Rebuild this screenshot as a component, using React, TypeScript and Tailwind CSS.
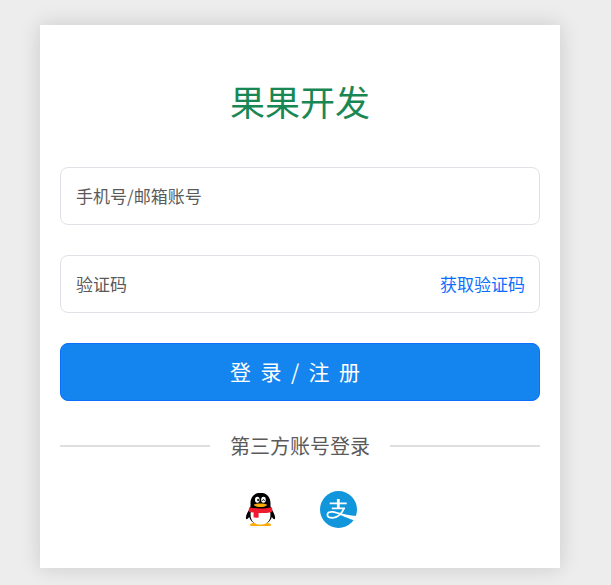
import React, { useState } from 'react';

const QQIcon: React.FC = () => (
  <svg viewBox="1 0 37 37" className="size-[37px]" aria-hidden="true">
    <path
      d="M18.500 1.700c-6.200 0-10 4.600-10 10.300v3.200c-.6.9-.8 1.700-.6 2.600-2.500 3.300-4.300 7-4 9.500.2 1.500 1.400 1.300 3.300-1.300 1.300 4.600 5.500 7.500 11.300 7.500s10-2.900 11.300-7.500c1.900 2.600 3.100 2.800 3.300 1.300.3-2.500-1.500-6.200-4-9.500.2-.9 0-1.700-.6-2.600V12c0-5.700-3.800-10.300-10-10.300z"
      fill="#000"
    />
    <path
      d="M7.800 34.200c0-1.500 2.500-2.400 5-2.400h11.400c2.500 0 5 .9 5 2.400 0 .6-2 .8-5 .8H12.800c-3 0-5-.2-5-.8z"
      fill="#faab07"
    />
    <path d="M8.900 20.500h19.200c1.600 8.200-2.300 13.100-9.600 13.100s-11.200-4.900-9.600-13.100z" fill="#fff" />
    <ellipse cx="15.300" cy="8.800" rx="2.300" ry="3" fill="#fff" />
    <ellipse cx="21.500" cy="8.800" rx="2.300" ry="3" fill="#fff" />
    <ellipse cx="16.100" cy="9" rx="0.900" ry="1.200" fill="#000" />
    <path d="M20.600 9.900c.1-1.900 1.700-1.900 1.800 0" fill="none" stroke="#000" strokeWidth="0.900" />
    <path d="M12.100 13.600c1.800-1.500 11-1.500 12.800 0 .3 1.500-3.200 2.500-6.400 2.500s-6.700-1-6.400-2.500z" fill="#faab07" />
    <path
      d="M7.400 16.200c6.900 1.700 15.300 1.700 22.200 0 .9 1.500 1 3.200.4 4.700-4.300 1-8.900 1.300-13.400 1.100v4.400c-1.800.3-3.400.3-5 0v-4.900l-4.500-.6c-.6-1.500-.4-3.200.3-4.700z"
      fill="#f0192d"
    />
  </svg>
);

const AlipayIcon: React.FC = () => (
  <svg viewBox="0 0 37 37" className="size-[37px]" aria-hidden="true">
    <circle cx="18.500" cy="18.500" r="18.500" fill="#1296db" />
    <path d="M16.900 8h2.800v9.500h-2.800zM9.700 11.500h17v1.700h-17zM11.800 16.600h13.200v1.700H11.800z" fill="#fff" />
    <path
      d="M24 17.200c-1.700 4.900-6.200 9.600-11.400 9.600-3.500 0-5.200-1.300-5.200-3.100 0-2.100 2.500-3.200 5.400-2.800 4.600.7 8.600 2.500 13.200 4.500"
      fill="none"
      stroke="#fff"
      strokeWidth="1.700"
    />
    <path d="M18 21.300c6 2 12 3.500 18.400 3.600-.4 1.600-1.100 3.100-2 4.500-5.700-1.500-11.400-4.400-16.400-8.100z" fill="#fff" />
  </svg>
);

interface FloatingInputProps {
  id: string;
  label: string;
  children?: React.ReactNode;
}

const FloatingInput: React.FC<FloatingInputProps> = ({ id, label, children }) => {
  const [value, setValue] = useState('');

  return (
    <div className="relative flex h-[58px] rounded-lg border border-[#dee2e6]">
      <input
        type="text"
        id={id}
        className="min-w-0 flex-1 rounded-lg px-[15px] text-[17px] outline-none"
        value={value}
        onChange={event => setValue(event.target.value)}
      />
      <label
        htmlFor={id}
        className={
          value
            ? 'absolute top-1 left-[15px] text-xs'
            : 'absolute inset-y-0 left-[15px] flex items-center text-[17px]'
        }
      >
        {label}
      </label>
      {children}
    </div>
  );
};

const App: React.FC = () => {
  const handleSubmit = (event: React.FormEvent<HTMLFormElement>) => {
    event.preventDefault();
  };

  return (
    <div className="min-h-screen bg-[#ededed] pt-[25px] pr-[51px] pb-4 pl-10 font-['Noto_Sans_CJK_SC',sans-serif] text-[#5a5a5a]">
      <main className="mx-auto max-w-[520px] bg-white px-5 pt-[50px] pb-10 shadow-[0_0_20px_rgba(0,0,0,0.15)]">
        <h1 className="mb-10 text-center text-[35px] leading-[52px] text-[#198754]">果果开发</h1>

        <form onSubmit={handleSubmit} className="flex flex-col gap-[30px]">
          <FloatingInput id="account" label="手机号/邮箱账号" />
          <FloatingInput id="code" label="验证码">
            <button type="button" className="px-3.5 text-[17px] text-[#0d6efd]">
              获取验证码
            </button>
          </FloatingInput>

          <button
            type="submit"
            className="h-[58px] rounded-lg border border-[#0d6efd] bg-[#1485ee] pr-2.5 text-[21px] whitespace-pre text-white"
          >
            登  录  /  注  册
          </button>
        </form>

        <div className="mt-[30px] flex items-center gap-5">
          <div className="h-0.5 flex-1 bg-[#dfdfdf]" />
          <h2 className="text-xl leading-[30px]">第三方账号登录</h2>
          <div className="h-0.5 flex-1 bg-[#dfdfdf]" />
        </div>

        <div className="mt-[30px] flex justify-center gap-10">
          <button type="button" aria-label="QQ">
            <QQIcon />
          </button>
          <button type="button" aria-label="支付宝">
            <AlipayIcon />
          </button>
        </div>
      </main>
    </div>
  );
};

export default App;
